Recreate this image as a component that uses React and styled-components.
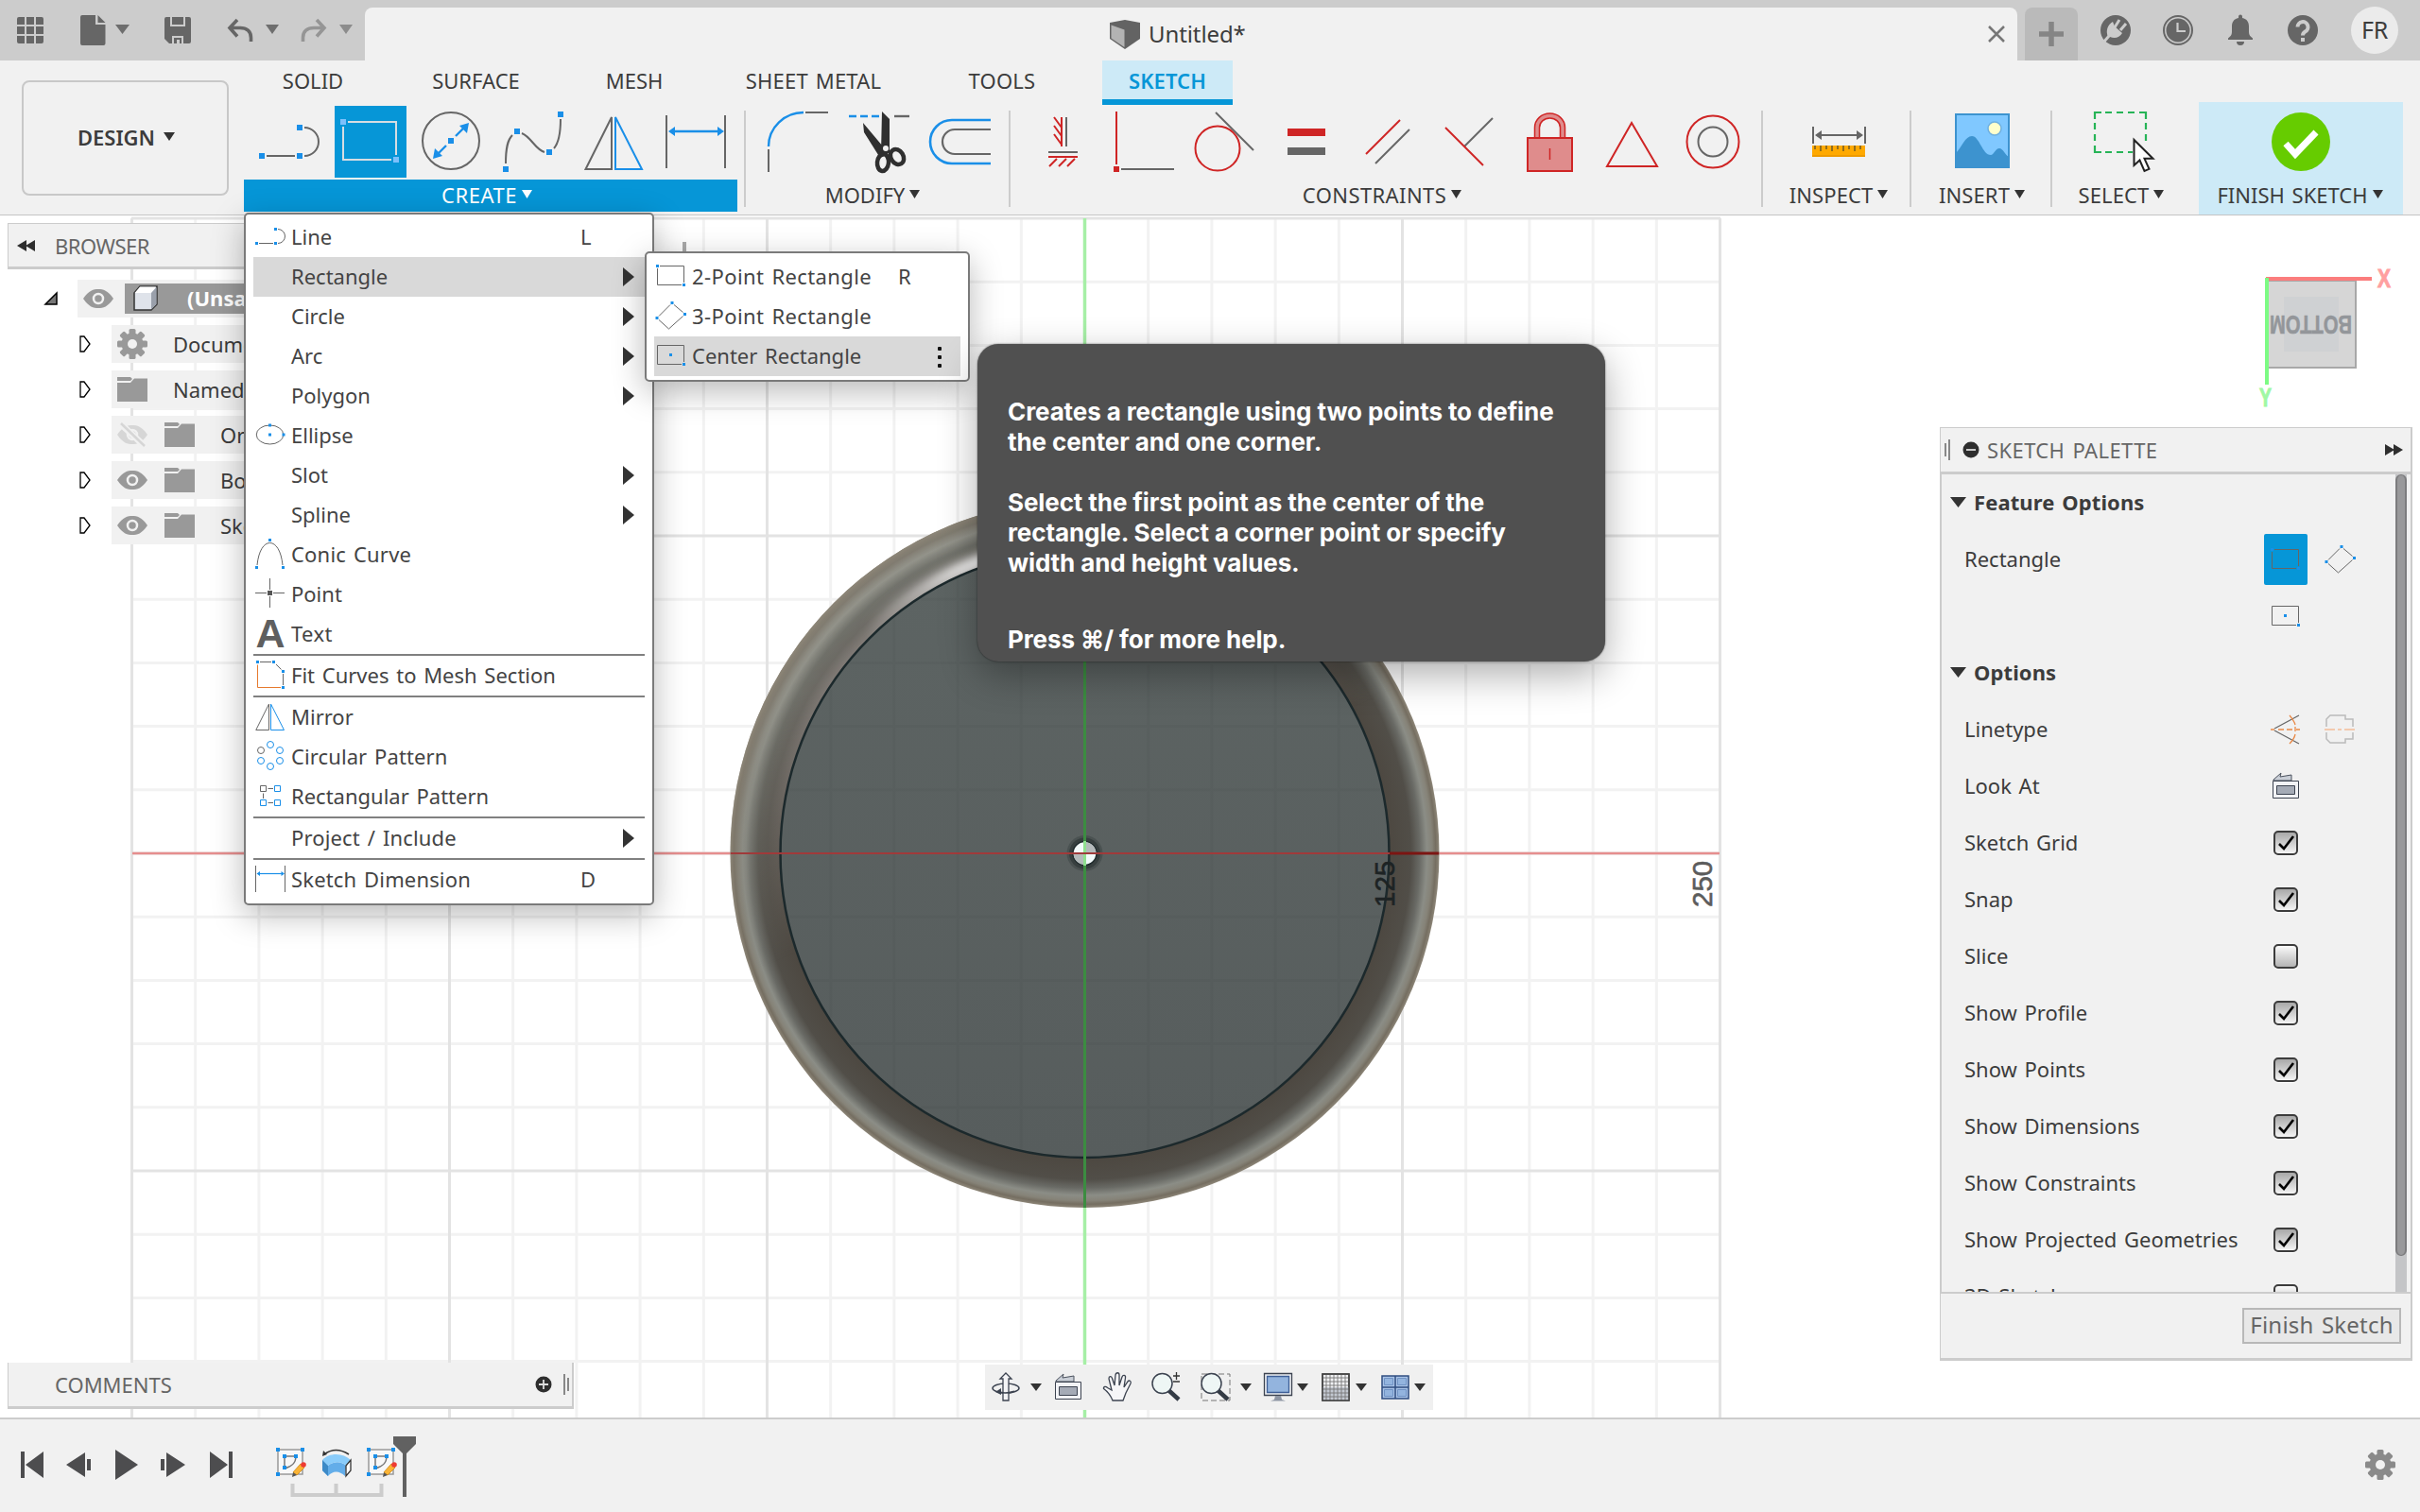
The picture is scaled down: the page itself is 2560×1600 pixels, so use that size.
import React from 'react';
import styled, { createGlobalStyle } from 'styled-components';

const GlobalStyle = createGlobalStyle`
  *, *::before, *::after { box-sizing: border-box; }
  body { margin: 0; background: #fff; }
  svg { display: block; flex: none; overflow: visible; }
`;

const GRAY = '#666';
const BLUE = '#1a8fe8';
const RED = '#cf2525';

/* ---------- frame ---------- */

const Screen = styled.div`
  position: relative;
  width: 2560px;
  height: 1600px;
  overflow: hidden;
  display: flex;
  flex-direction: column;
  background: #fff;
  color: #3c3c3c;
  font-family: 'Noto Sans', 'Open Sans', sans-serif;
  font-size: 22px;
  line-height: 30px;
  word-spacing: 2px;
  white-space: nowrap;
`;

const TopBar = styled.header`
  height: 64px;
  flex: none;
  display: flex;
  align-items: flex-end;
  background: #ccc;
`;

const QuickTools = styled.div`
  width: 386px;
  height: 64px;
  display: flex;
  align-items: center;
`;

const Slot = styled.div`
  margin-left: ${(p) => p.$ml || 0}px;
  margin-top: ${(p) => p.$mt || 0}px;
  display: flex;
`;

const DocumentTab = styled.div`
  width: 1748px;
  height: 56px;
  display: flex;
  align-items: center;
  padding-left: 788px;
  border-radius: 8px 8px 0 0;
  background: #f1f1f1;
`;

const DocumentTitle = styled.span`
  width: 888px;
  margin-left: 9px;
  margin-top: -1px;
  font-size: 24px;
  letter-spacing: -0.1px;
`;

const NewTab = styled.div`
  width: 56px;
  height: 56px;
  margin-left: 8px;
  display: flex;
  align-items: center;
  justify-content: center;
  border-radius: 8px 8px 0 0;
  background: #bababa;
`;

const Account = styled.div`
  height: 64px;
  display: flex;
  align-items: center;
  gap: 34px;
  padding-left: 24px;
`;

const Avatar = styled.div`
  width: 50px;
  height: 50px;
  margin-left: 1px;
  border-radius: 50%;
  background: #ebebeb;
  font-size: 25px;
  line-height: 48px;
  text-align: center;
  letter-spacing: -0.2px;
`;

/* ---------- ribbon ---------- */

const Ribbon = styled.section`
  height: 164px;
  flex: none;
  display: flex;
  background: #f1f1f1;
  border-bottom: 1px solid #c4c4c4;
`;

const WorkspaceButton = styled.div`
  width: 219px;
  height: 122px;
  margin: 21px 0 0 23px;
  padding: 0 0 3px 2px;
  display: flex;
  align-items: center;
  justify-content: center;
  gap: 9px;
  border: 2px solid #c8c8c8;
  border-radius: 8px;
  font-weight: 600;
`;

const RibbonMain = styled.div`
  margin-left: 16px;
  display: flex;
  flex-direction: column;
`;

const RibbonTabs = styled.nav`
  height: 48px;
  display: flex;
`;

const RibbonTab = styled.div`
  width: ${(p) => p.$w}px;
  height: 47px;
  padding-top: 6px;
  text-align: center;
  letter-spacing: ${(p) => p.$ls || 0}px;
  color: ${(p) => (p.$active ? '#0696d7' : 'inherit')};
  font-weight: ${(p) => (p.$active ? 600 : 400)};
  background: ${(p) => (p.$active ? '#cdeaf7' : 'none')};
  border-bottom: ${(p) => (p.$active ? '6px solid #0696d7' : '0')};
`;

const Groups = styled.div`
  display: flex;
`;

const Group = styled.div`
  width: ${(p) => p.$w}px;
  height: 115px;
  display: flex;
  flex-direction: column;
`;

const Tools = styled.div`
  height: 78px;
  padding-left: ${(p) => p.$pl || 0}px;
  display: flex;
  justify-content: center;
  gap: 10px;
`;

const Tool = styled.div`
  width: 76px;
  height: 76px;
  background: ${(p) => (p.$active ? '#0696d7' : 'none')};
`;

const GroupLabel = styled.div`
  height: 34px;
  display: flex;
  align-items: center;
  justify-content: center;
  gap: 5px;
  padding-right: ${(p) => p.$pr || 0}px;
  padding-bottom: 3px;
  color: ${(p) => (p.$active ? '#fff' : 'inherit')};
  background: ${(p) => (p.$active ? '#0696d7' : 'none')};
  letter-spacing: ${(p) => p.$ls || 0}px;
`;

const Divider = styled.div`
  width: 2px;
  height: 102px;
  margin: 5px ${(p) => p.$mr}px 0 ${(p) => p.$ml}px;
  background: #ccc;
`;

const FinishGroup = styled.div`
  width: 216px;
  height: 119px;
  margin: -4px 0 0 ${(p) => p.$ml}px;
  padding-top: 4px;
  display: flex;
  flex-direction: column;
  background: #cdeaf7;
`;

/* ---------- canvas and its panels ---------- */

const Canvas = styled.main`
  position: relative;
  height: 1272px;
  flex: none;
  overflow: hidden;
`;

const BrowserPanel = styled.aside`
  position: absolute;
  left: 0;
  top: 8px;
  width: 420px;
  display: flex;
  flex-direction: column;
`;

const BrowserHeader = styled.div`
  height: 49px;
  margin: 0 0 11px 8px;
  padding-left: 9px;
  display: flex;
  align-items: center;
  gap: 20px;
  color: #666;
  background: #f1f1f1;
  border: 1px solid #ccc;
  border-bottom-width: 3px;
  letter-spacing: -0.5px;
`;

const TreeRow = styled.div`
  height: 40px;
  margin-bottom: 8px;
  display: flex;
  align-items: center;
`;

const Expander = styled.div`
  width: ${(p) => p.$w}px;
  padding-left: ${(p) => p.$pl}px;
`;

const TreeBody = styled.div`
  flex: 1;
  height: 40px;
  padding-left: 6px;
  display: flex;
  align-items: center;
  background: #f1f1f1;
`;

const TreeIcon = styled.div`
  width: 32px;
  margin-right: ${(p) => p.$mr || 18}px;
`;

const TreeName = styled.span`
  margin-left: 9px;
  margin-top: -1px;
`;

const SelectedNode = styled.div`
  flex: 1;
  height: 32px;
  padding-left: 9px;
  padding-bottom: 2px;
  display: flex;
  align-items: center;
  gap: 31px;
  color: #fff;
  background: #999;
  font-weight: 700;
`;

const CommentsPanel = styled.aside`
  position: absolute;
  left: 8px;
  top: 1214px;
  width: 599px;
  height: 49px;
  padding: 0 2px 0 49px;
  display: flex;
  align-items: center;
  color: #666;
  background: #f1f1f1;
  border: solid #ccc;
  border-width: 0 2px 3px 1px;
`;

const Spacer = styled.div`
  flex: 1;
`;

const NavBar = styled.div`
  position: absolute;
  left: 1042px;
  top: 1216px;
  width: 474px;
  height: 48px;
  display: flex;
  align-items: center;
  background: #f0f0f0;
`;

const Palette = styled.aside`
  position: absolute;
  left: 2052px;
  top: 224px;
  width: 500px;
  display: flex;
  flex-direction: column;
`;

const PaletteHeader = styled.div`
  height: 50px;
  padding: 0 8px 0 3px;
  display: flex;
  align-items: center;
  color: #666;
  background: #f1f1f1;
  border: solid #ccc;
  border-width: 1px 2px 3px 1px;
  letter-spacing: 0.4px;
`;

const PaletteBody = styled.div`
  height: 865px;
  display: flex;
  overflow: hidden;
  background: #f1f1f1;
  border: solid #ccc;
  border-width: 0 2px;
`;

const PaletteList = styled.div`
  width: 480px;
`;

const PaletteSection = styled.div`
  height: 60px;
  padding: 0 0 2px 9px;
  display: flex;
  align-items: center;
  gap: 8px;
  font-weight: 700;
  letter-spacing: 0.1px;
`;

const PaletteRow = styled.div`
  height: 60px;
  padding: 0 0 2px 24px;
  display: grid;
  grid-template-columns: 317px auto;
  align-items: center;
`;

const PaletteControls = styled.div`
  margin-top: 2px;
  display: flex;
  gap: 12px;
`;

const PaletteButton = styled.div`
  width: 46px;
  height: 54px;
  display: flex;
  align-items: center;
  justify-content: center;
  border-radius: 2px;
  background: ${(p) => (p.$active ? '#0696d7' : 'none')};
`;

const CheckBox = styled.div`
  width: 26px;
  height: 26px;
  margin: 1px 0 0 10px;
  border: 2px solid #3c3c3c;
  border-radius: 5px;
  background: ${(p) => (p.$on ? 'linear-gradient(#a8a8a8, #f4f4f4)' : 'linear-gradient(#fafafa, #b4b4b4)')};
  box-shadow: 0 1px 1px #fff;
`;

const ScrollTrack = styled.div`
  width: 12px;
  background: #c4c5c7;
`;

const ScrollThumb = styled.div`
  height: 827px;
  border: solid #7c7c7e;
  border-width: 1px 2px;
  border-radius: 6px;
  background: #99999b;
`;

const PaletteFooter = styled.div`
  height: 73px;
  padding-right: 10px;
  display: flex;
  align-items: center;
  justify-content: flex-end;
  background: #f1f1f1;
  border: solid #ccc;
  border-width: 2px 2px 3px 1px;
`;

const FinishButton = styled.div`
  width: 168px;
  height: 38px;
  border: 2px solid #b8b8b8;
  background: #e8e8e8;
  color: #666;
  font-size: 24px;
  line-height: 32px;
  text-align: center;
  letter-spacing: 0.2px;
`;

/* ---------- menus ---------- */

const MenuBox = styled.div`
  position: absolute;
  left: ${(p) => p.$x}px;
  top: ${(p) => p.$y}px;
  width: ${(p) => p.$w}px;
  padding: 4px 8px;
  display: flex;
  flex-direction: column;
  background: #fff;
  border: 2px solid #7a7a7a;
  border-radius: 5px;
  color: #444;
  box-shadow: 0 10px 34px rgba(0, 0, 0, 0.28);
`;

const CreateMenu = styled(MenuBox)`
  padding-top: 3px;
`;

const MenuRow = styled.div`
  height: 42px;
  padding: 0 11px 0 2px;
  display: flex;
  align-items: center;
  background: ${(p) => (p.$active ? '#d9d9d9' : 'none')};
`;

const MenuIcon = styled.div`
  width: 32px;
  height: 34px;
  margin-right: 6px;
`;

const MenuLabel = styled.span`
  flex: 1;
  margin-top: -2px;
  letter-spacing: ${(p) => p.$ls || 0}px;
`;

const Shortcut = styled.span`
  width: ${(p) => p.$w || 57}px;
  margin-top: -2px;
`;

const MenuRule = styled.div`
  height: 2px;
  background: #808080;
`;

const Dots = styled.div`
  width: 22px;
  height: 22px;
  margin-top: 2px;
  display: flex;
  flex-direction: column;
  align-items: center;
  justify-content: space-between;
  & > i { width: 4px; height: 4px; border-radius: 1px; background: #111; }
`;

const Tooltip = styled.div`
  position: absolute;
  left: 1034px;
  top: 364px;
  width: 664px;
  height: 336px;
  padding: 56px 32px 0;
  border-radius: 22px;
  background: #505050;
  color: #fff;
  font-family: Inter, 'DejaVu Sans', sans-serif;
  font-size: 26px;
  font-weight: 700;
  line-height: 32px;
  letter-spacing: -0.1px;
  word-spacing: 0;
  box-shadow: 0 14px 40px rgba(0, 0, 0, 0.32), 0 0 2px rgba(0, 0, 0, 0.6);
  & > p { margin: 0 0 32px; }
  & > p:last-child { padding-top: 17px; }
`;

/* ---------- timeline ---------- */

const Timeline = styled.footer`
  height: 100px;
  flex: none;
  display: flex;
  align-items: flex-start;
  background: #f1f1f1;
  border-top: 2px solid #ccc;
`;

const Features = styled.div`
  width: 130px;
  margin: 30px 0 0 46px;
  display: flex;
  flex-direction: column;
  gap: 6px;
`;

const FeatureRow = styled.div`
  display: flex;
  gap: 16px;
`;

/* ---------- small drawings ---------- */

const Down = ({ w = 12, h = 10, c = '#333' }) => (
  <svg width={w} height={h} viewBox="0 0 12 10" preserveAspectRatio="none"><path d="M0 0h12L6 10z" fill={c} /></svg>
);

const Sq = ({ x, y, c = BLUE, s = 6 }) => <rect x={x - s / 2} y={y - s / 2} width={s} height={s} fill={c} />;

const shapes = {
  line: <g fill="none" stroke={GRAY} strokeWidth="2"><path d="M14 53h30M54 53a15 15 0 0 0 0-30" /><g stroke="none"><Sq x={9} y={53} /><Sq x={49} y={53} /><Sq x={49} y={23} /></g></g>,
  rectActive: <g><path d="M14 17H65V52M60 57H9V22" fill="none" stroke="#d6dde2" strokeWidth="2" /><Sq x={9} y={17} c="#7cc0fb" /><Sq x={65} y={57} c="#7cc0fb" /></g>,
  rect: <g><path d="M14 17H65V52M60 57H9V22" fill="none" stroke={GRAY} strokeWidth="2" /><Sq x={9} y={17} /><Sq x={65} y={57} /></g>,
  centerRect: <g><path d="M65 52V17H9V57H60" fill="none" stroke={GRAY} strokeWidth="2" /><Sq x={37} y={37} /><Sq x={65} y={57} /></g>,
  diamond: <g><path d="M36 15L12 39M44 15L63 31M63 39L33 66L12 47" fill="none" stroke={GRAY} strokeWidth="2" /><Sq x={40} y={11} /><Sq x={8} y={43} /><Sq x={67} y={35} /></g>,
  circle: <g><circle cx="37" cy="37" r="30" fill="none" stroke={GRAY} strokeWidth="2" /><path d="M42 32L51 23M32 42L23 51" stroke={BLUE} strokeWidth="2.4" /><path d="M56 18l-2 11-8-8zM18 56l2-11 8 8z" fill={BLUE} /><Sq x={37} y={37} /></g>,
  spline: <g><path d="M9 61C9 44 11 36 16 31M26 29C36 33 40 46 50 49M60 45C66 38 67 24 67 14" fill="none" stroke={GRAY} strokeWidth="2" /><Sq x={9} y={67} /><Sq x={21} y={27} /><Sq x={55} y={49} /><Sq x={67} y={9} /></g>,
  mirror: <g fill="none" strokeWidth="2"><path d="M35 12V67H7.500z" stroke={GRAY} /><path d="M39 12V67H67z" stroke={BLUE} /></g>,
  dimension: <g><path d="M7 10V66M69 10V66" stroke={GRAY} strokeWidth="2" /><path d="M12 27H64" stroke={BLUE} strokeWidth="2.4" /><path d="M9 27l7-5v10zM68 27l-7-5v10z" fill={BLUE} /></g>,
  fillet: <g fill="none"><path d="M7 43A37 36 0 0 1 44 7" stroke={BLUE} strokeWidth="2.4" /><path d="M46 7H70M7 46V70" stroke={GRAY} strokeWidth="2" /></g>,
  trim: <g><path d="M6 11h8M18 11h8M30 11h8" stroke={BLUE} strokeWidth="2.4" /><path d="M54 11h16" stroke={GRAY} strokeWidth="2.4" /><path d="M41 6l8 8v35l-5 4-4-3zM21 18l21 25 2 10-5 2-17-27z" fill="#2f2f2f" /><circle cx="45" cy="45" r="3" fill="#f1f1f1" /><g fill="none" stroke="#2f2f2f" strokeWidth="4.500"><ellipse cx="42" cy="60" rx="6" ry="9" transform="rotate(6 42 60)" /><ellipse cx="57" cy="54" rx="6.500" ry="8.500" transform="rotate(-32 57 54)" /></g></g>,
  offset: <g fill="none"><path d="M70 15H29a23 23 0 0 0 0 46h41" stroke={BLUE} strokeWidth="2.600" /><path d="M70 25H32a13 13 0 0 0 0 26h38" stroke={GRAY} strokeWidth="2.200" /></g>,
  ground: <g fill="none" strokeWidth="2"><path d="M37 12V43M29 12l8 11M29 21l8 11M29 30l8 11M23 54H54M32 56l-8 8M42 56l-8 8M51 56l-8 8" stroke={RED} /><path d="M42 12V43M23 49H54" stroke={GRAY} /></g>,
  coincident: <g><path d="M9 6V62" stroke={RED} strokeWidth="2" /><path d="M14 67H70" stroke={GRAY} strokeWidth="2" /><Sq x={9} y={67} c={RED} /></g>,
  tangent: <g fill="none" strokeWidth="2"><path d="M28 7L68 47" stroke={GRAY} /><circle cx="30" cy="45" r="23.500" stroke={RED} /></g>,
  equal: <g><path d="M18 24h40v8H18z" fill={RED} /><path d="M18 44h40v8H18z" fill={GRAY} /></g>,
  parallel: <g strokeWidth="2"><path d="M15 51L51 15" stroke={RED} /><path d="M25 61L61 25" stroke={GRAY} /></g>,
  perpendicular: <g strokeWidth="2"><path d="M33 43L63 13" stroke={GRAY} /><path d="M13 23L53 63" stroke={RED} /></g>,
  lock: <g stroke={RED}><path d="M21.500 34V23a16 15 0 0 1 32 0V34h-5V23a11 10 0 0 0-22 0V34z" fill="#df8c8c" strokeWidth="1.500" /><path d="M14 34h47v35H14z" fill="#df8c8c" strokeWidth="2" /><path d="M37.500 45V57" strokeWidth="1.500" /></g>,
  polygon: <path d="M38 18L12 64H65z" fill="none" stroke={RED} strokeWidth="2" />,
  concentric: <g fill="none" strokeWidth="2"><circle cx="38" cy="38" r="27.500" stroke={RED} /><circle cx="38" cy="38" r="15.500" stroke={GRAY} /></g>,
  inspect: <g><path d="M11 22V40M66 22V40M15 31H62" stroke={GRAY} strokeWidth="2" /><path d="M13 31l7-5v10zM64 31l-7-5v10z" fill={GRAY} /><path d="M10 42h56v12H10z" fill="#ffa900" /><path d="M10 52h56v2H10z" fill="#ee9a00" /><path d="M13 42v4M19 42v6M25 42v4M31 42v6M37 42v4M43 42v6M49 42v4M55 42v6M61 42v4" stroke="#6f5a26" strokeWidth="1.500" /></g>,
  insert: <g><path d="M10 9h56v56H10z" fill="#80c8ff" stroke="#3d93cf" strokeWidth="2" /><path d="M10 50C16 44 20 32 27 32C35 32 38 52 47 52C50 52 52 45 56 45C60 45 62 52 66 54V65H10z" fill="#3d93cf" /><circle cx="51" cy="24" r="7" fill="#ffffcc" stroke="#6fb0e0" strokeWidth="1.500" /></g>,
  select: <g><path d="M10 14V7h7M21 7h7M33 7h7M45 7h7M57 7h7V14M10 18v7M10 30v7M10 42v7h7M21 49h7M33 49h7M45 49h5M64 18v7M64 30v7" fill="none" stroke="#27b457" strokeWidth="2.200" /><path d="M51.500 36V63l6-5.500 5 11.500 5-2.200-5-11h9z" fill="#fff" stroke="#222" strokeWidth="2" /></g>,
  finish: <g><circle cx="38" cy="38" r="31" fill="#6c0" /><path d="M22 40l10 11L54 28" fill="none" stroke="#fff" strokeWidth="7" /></g>,
  ellipse: <g><ellipse cx="37" cy="38" rx="28.500" ry="20" fill="none" stroke={GRAY} strokeWidth="2" /><Sq x={37} y={18} /><Sq x={66} y={38} /><Sq x={37} y={38} /></g>,
  conic: <g><path d="M10 62C13 32 24 15 37 15S61 32 64 62" fill="none" stroke={GRAY} strokeWidth="2" /><Sq x={37} y={9} /><Sq x={9} y={67} /><Sq x={65} y={67} /></g>,
  point: <g><path d="M6 37H30M44 37H68M37 6V30M37 44V68" stroke={GRAY} strokeWidth="2" /><Sq x={37} y={37} c="#555" s={10} /></g>,
  text: <text x="38" y="68" fontFamily="'Liberation Sans', sans-serif" fontWeight="700" fontSize="86" fill="#5f5f5f" textAnchor="middle">A</text>,
  fit: <g fill="none" strokeWidth="2"><path d="M16 11H40M50 16l11 11M65 36V60" stroke={GRAY} /><path d="M11 17V65H60" stroke="#e67a2e" /><g stroke="none"><Sq x={11} y={11} /><Sq x={45} y={11} /><Sq x={65} y={31} /><Sq x={65} y={65} /></g></g>,
  circular: <g fill="none" stroke={BLUE} strokeWidth="2">{[[38, 14], [58, 26], [58, 48], [38, 60], [18, 48]].map(([x, y]) => <circle key={x + '-' + y} cx={x} cy={y} r="7" />)}<circle cx="18" cy="26" r="7" stroke={GRAY} /></g>,
  rectangular: <g fill="none" stroke={BLUE} strokeWidth="2"><path d="M47 17h12v12H47zM17 47h12v12H17zM47 47h12v12H47z" /><path d="M17 17h12v12H17zM33 23h11M33 53h11M23 33v11" stroke={GRAY} /></g>,
};

const BigIcon = ({ name }) => <svg width="76" height="76" viewBox="0 0 76 76">{shapes[name]}</svg>;
const SmallIcon = ({ name }) => <svg width="32" height="32" viewBox="6 6 64 64">{shapes[name]}</svg>;

const Eye = ({ off }) => (
  <svg width="32" height="24" viewBox="0 0 32 24">
    <g opacity={off ? 0.3 : 1}>
      <path d="M0 12C6 3 11 2 16 2s10 1 16 10c-6 9-11 10-16 10S6 21 0 12z" fill="#999" />
      <circle cx="16" cy="12" r="5" fill="#999" stroke="#f1f1f1" strokeWidth="2.500" />
      {off && <path d="M3 0L29 24" stroke="#f1f1f1" strokeWidth="7" />}
      {off && <path d="M4 0L29 24" stroke="#999" strokeWidth="2.500" />}
    </g>
  </svg>
);

const Folder = () => (
  <svg width="32" height="26" viewBox="0 0 32 26">
    <path d="M0 0h14l2 2-2 2H0zM0 6h14l4-4.500h14V26H0z" fill="#999" />
  </svg>
);

const Gear = ({ s = 32, c = '#999', hole = '#f1f1f1' }) => (
  <svg width={s} height={s} viewBox="-16 -16 32 32">
    {[0, 45, 90, 135].map((a) => <rect key={a} x="-3.500" y="-16" width="7" height="32" rx="1.500" fill={c} transform={`rotate(${a})`} />)}
    <circle r="11.500" fill={c} /><circle r="5" fill={hole} />
  </svg>
);

const Handle = ({ flip }) => (
  <svg width="8" height="22" viewBox="0 0 8 22">
    <path d={flip ? 'M2 0V22M6 4V18' : 'M2 4V18M6 0V22'} stroke="#888" strokeWidth="2" />
  </svg>
);

const RoundSign = ({ plus }) => (
  <svg width="18" height="18" viewBox="0 0 18 18">
    <circle cx="9" cy="9" r="8.500" fill="#2e2e2e" />
    <path d={plus ? 'M4 9h10M9 4v10' : 'M4 9h10'} stroke="#ddd" strokeWidth="1.800" />
  </svg>
);

const Chevrons = ({ left }) => (
  <svg width="20" height="12" viewBox="0 0 20 12">
    <path d={left ? 'M0 6L10 0v12zM9 6l10-6v12z' : 'M1 0l10 6-10 6zM10 0l10 6-10 6z'} fill="#2e2e2e" />
  </svg>
);

const LookAt = () => (
  <svg width="32" height="32" viewBox="0 0 32 32">
    <path d="M3 9l8-7-1 4 12-2v6H3z" fill="#c9ced6" stroke="#4b525e" />
    <path d="M2.500 10.500h27v18h-27z" fill="#f2f3f6" stroke="#3c4350" />
    <path d="M6.500 15.500h19v9h-19z" fill="#a5abb6" stroke="#3c4350" />
  </svg>
);

const Check = () => (
  <svg width="22" height="22" viewBox="0 0 22 22"><path d="M4 12l5 5L19 4" fill="none" stroke="#000" strokeWidth="2.600" /></svg>
);

/* ---------- model view ---------- */

const CX = 1147.5;
const CY = 903;
const STEP = 67.2;

const gridLines = () => {
  const minor = [];
  const major = [];
  for (let i = -15; i <= 10; i += 1) {
    const list = i % 5 === 0 ? major : minor;
    const stroke = i % 5 === 0 ? '#e3e3e3' : '#f2f2f2';
    list.push(<path key={'v' + i} d={`M${CX + i * STEP} 231V1500`} stroke={stroke} strokeWidth="3" />);
    if (i >= -10) {
      list.push(<path key={'h' + i} d={`M139 ${CY + i * STEP}H1820`} stroke={stroke} strokeWidth="3" />);
    }
  }
  return [...minor, ...major];
};

const ModelView = () => (
  <svg width="2560" height="1272" viewBox="0 228 2560 1272">
    <defs>
      <radialGradient id="rim" gradientUnits="userSpaceOnUse" cx={CX} cy={CY} r="375">
        <stop offset="0.860" stopColor="#4d4841" />
        <stop offset="0.920" stopColor="#514e48" />
        <stop offset="0.945" stopColor="#696a65" />
        <stop offset="0.965" stopColor="#8b8d86" />
        <stop offset="0.980" stopColor="#868378" />
        <stop offset="0.990" stopColor="#756e61" />
        <stop offset="1" stopColor="#8d8678" />
      </radialGradient>
      <radialGradient id="rimTop" gradientUnits="userSpaceOnUse" cx={CX} cy={CY} r="375">
        <stop offset="0.860" stopColor="#8a8480" />
        <stop offset="0.895" stopColor="#716f69" />
        <stop offset="0.925" stopColor="#74756e" />
        <stop offset="0.955" stopColor="#95958c" />
        <stop offset="0.980" stopColor="#807b70" />
        <stop offset="1" stopColor="#8d8678" />
      </radialGradient>
      <linearGradient id="fade" x1="0.200" y1="0" x2="0.420" y2="0.500">
        <stop offset="0" stopColor="#fff" />
        <stop offset="0.400" stopColor="#fff" stopOpacity="0.850" />
        <stop offset="1" stopColor="#fff" stopOpacity="0" />
      </linearGradient>
      <linearGradient id="glint" gradientUnits="userSpaceOnUse" x1="915" y1="0" x2="1040" y2="0">
        <stop offset="0" stopColor="#fff" stopOpacity="0" />
        <stop offset="0.500" stopColor="#fff" stopOpacity="0.450" />
        <stop offset="1" stopColor="#fff" />
      </linearGradient>
      <mask id="upper"><rect x="770" y="520" width="760" height="760" fill="url(#fade)" /></mask>
      <linearGradient id="face" x1="0" y1="0" x2="0" y2="1">
        <stop offset="0" stopColor="#5d6463" /><stop offset="1" stopColor="#575d5d" />
      </linearGradient>
      <filter id="soft" filterUnits="userSpaceOnUse" x="850" y="520" width="320" height="260"><feGaussianBlur stdDeviation="5" /></filter>
      <clipPath id="disc"><circle cx={CX} cy={CY} r="372" /></clipPath>
    </defs>
    {gridLines()}
    <path d={`M${CX} 231V1500`} stroke="#a6efa6" strokeWidth="3.500" />
    <path d={`M140 ${CY}H1819`} stroke="#e68e8e" strokeWidth="2.500" />
    <path d="M724 256V280" stroke="#aaa" strokeWidth="4" />
    <circle cx={CX} cy={CY} r="375" fill="url(#rim)" />
    <circle cx={CX} cy={CY} r="375" fill="url(#rimTop)" mask="url(#upper)" />
    <g clipPath="url(#disc)">
      <path d="M899 689A328 328 0 0 1 1090 580" fill="none" stroke="url(#glint)" strokeWidth="16" filter="url(#soft)" />
    </g>
    <circle cx={CX} cy={CY} r="322" fill="url(#face)" stroke="#1c292c" strokeWidth="2.500" />
    <g opacity="0.025" stroke="#000" strokeWidth="3">
      {[-4, -3, -2, -1, 1, 2, 3, 4].map((i) => {
        const half = Math.sqrt(320 * 320 - i * i * STEP * STEP);
        return <path key={i} d={`M${CX + i * STEP} ${CY - half}v${2 * half}M${CX - half} ${CY + i * STEP}h${2 * half}`} />;
      })}
    </g>
    <circle cx={CX} cy={CY} r="19" fill="#3f4848" opacity="0.600" />
    <circle cx={CX} cy={CY} r="16.500" fill="#343c3c" opacity="0.850" />
    <circle cx={CX} cy={CY} r="12.500" fill="#f2fafb" stroke="#1f2a2c" strokeWidth="1.500" />
    <path d={`M${CX} ${CY}v-12a12 12 0 0 1 12 12zM${CX} ${CY}v12a12 12 0 0 1-12-12z`} fill="#b4babb" />
    <path d={`M${CX} 560V${CY - 13}M${CX} ${CY + 13}V1278`} stroke="#3c8c41" strokeWidth="3" />
    <path d={`M${CX} ${CY - 13}v26`} stroke="#8fe08f" strokeWidth="3" />
    <path d={`M773 ${CY}H1470`} stroke="#a03a3a" strokeWidth="2" />
    <path d={`M1470 ${CY}H1522`} stroke="#7c1512" strokeWidth="3" />
    <g fontFamily="'Liberation Sans', Arial, sans-serif" fontSize="29.500" strokeWidth="0.600">
      <text transform="translate(1475 960) rotate(-90)" fill="#1d2324" stroke="#1d2324">125</text>
      <text transform="translate(1811 960) rotate(-90)" fill="#5c5c5c" stroke="#5c5c5c">250</text>
    </g>
    <rect x="2399" y="297" width="93" height="92" fill="#d6d6d6" stroke="#a8a8a8" strokeWidth="2" />
    <rect x="2416" y="314" width="58" height="58" fill="#cfd1d3" />
    <path d="M2397 295H2509" stroke="#fb7d7d" strokeWidth="4" />
    <path d="M2398 294V407" stroke="#7dfb84" strokeWidth="4" />
    <g fontFamily="'Liberation Sans', Arial, sans-serif" fontWeight="700">
      <text x="2515" y="304" fontSize="28" textLength="14" lengthAdjust="spacingAndGlyphs" fill="#ffa0a0" stroke="#ffa0a0">X</text>
      <text x="2390" y="430" fontSize="28" textLength="13" lengthAdjust="spacingAndGlyphs" fill="#a0f8a4" stroke="#a0f8a4">Y</text>
      <text transform="translate(2488 334) rotate(180)" fontSize="27.500" textLength="87" lengthAdjust="spacingAndGlyphs" fill="#93969a" stroke="#93969a" strokeWidth="0.600">BOTTOM</text>
    </g>
  </svg>
);

/* ---------- data ---------- */

const createItems = [
  { label: 'Line', icon: 'line', key: 'L' },
  { label: 'Rectangle', sub: true, active: true },
  { label: 'Circle', sub: true },
  { label: 'Arc', sub: true },
  { label: 'Polygon', sub: true },
  { label: 'Ellipse', icon: 'ellipse' },
  { label: 'Slot', sub: true },
  { label: 'Spline', sub: true },
  { label: 'Conic Curve', icon: 'conic', ls: 0.2 },
  { label: 'Point', icon: 'point' },
  { label: 'Text', icon: 'text', ls: 0.4 },
  { rule: true },
  { label: 'Fit Curves to Mesh Section', icon: 'fit' },
  { rule: true },
  { label: 'Mirror', icon: 'mirror' },
  { label: 'Circular Pattern', icon: 'circular', ls: 0.1 },
  { label: 'Rectangular Pattern', icon: 'rectangular' },
  { rule: true },
  { label: 'Project / Include', sub: true, ls: 0.15 },
  { rule: true },
  { label: 'Sketch Dimension', icon: 'dimension', key: 'D', ls: 0.15 },
];

const treeItems = [
  { name: 'Document Settings', icon: 'gear' },
  { name: 'Named Views', icon: 'folder' },
  { name: 'Origin', icon: 'folder', eye: 'off' },
  { name: 'Bodies', icon: 'folder', eye: 'on' },
  { name: 'Sketches', icon: 'folder', eye: 'on' },
];

const checks = [
  ['Sketch Grid', true], ['Snap', true], ['Slice', false], ['Show Profile', true], ['Show Points', true],
  ['Show Dimensions', true], ['Show Constraints', true], ['Show Projected Geometries', true], ['3D Sketch', false],
];

const ribbonTabs = [
  ['SOLID', 146, 0], ['SURFACE', 199, 0], ['MESH', 136, 0], ['SHEET METAL', 243, 0.2], ['TOOLS', 156, 0.2],
];

/* ---------- sections ---------- */

const Header = () => (
  <TopBar>
    <QuickTools>
      <Slot $ml={18}>
        <svg width="28" height="28" viewBox="0 0 28 28"><path d="M0 2a2 2 0 0 1 2-2h6v8H0zM10 0h8v8h-8zM20 0h6a2 2 0 0 1 2 2v6h-8zM0 10h8v8H0zM10 10h8v8h-8zM20 10h8v8h-8zM0 20h8v8H2a2 2 0 0 1-2-2zM10 20h8v8h-8zM20 20h8v6a2 2 0 0 1-2 2h-6z" fill={GRAY} /></svg>
      </Slot>
      <Slot $ml={39}>
        <svg width="27" height="32" viewBox="0 0 27 32"><path d="M2 0h14v10h10.500v20a2 2 0 0 1-2 2H2a2 2 0 0 1-2-2V2a2 2 0 0 1 2-2zM18.500 0l8 8h-8z" fill={GRAY} /></svg>
      </Slot>
      <Slot $ml={10} $mt={-3}><Down w={15} h={10} c="#6e6e6e" /></Slot>
      <Slot $ml={37}>
        <svg width="28" height="28" viewBox="0 0 28 28">
          <path d="M2 0h4v10h16V0h4a2 2 0 0 1 2 2v24a2 2 0 0 1-2 2h-6v-8H8v8H5l-5-5V2a2 2 0 0 1 2-2zM8 0h12v8H8zM10 22h8v6h-2v-4h-3v4h-3z" fill={GRAY} />
        </svg>
      </Slot>
      <Slot $ml={39}>
        <svg width="26" height="24" viewBox="0 0 26 24"><path d="M24.500 24V20C24.500 13 20 9.500 13 9.500H3M10 1L2 9.500l8 9" fill="none" stroke={GRAY} strokeWidth="3.600" /></svg>
      </Slot>
      <Slot $ml={14} $mt={-3}><Down w={14} h={10} c="#6e6e6e" /></Slot>
      <Slot $ml={24}>
        <svg width="26" height="24" viewBox="0 0 26 24"><path d="M1.500 24V20C1.500 13 6 9.500 13 9.500H23M16 1l8 8.500-8 9" fill="none" stroke="#959595" strokeWidth="3.600" /></svg>
      </Slot>
      <Slot $ml={14} $mt={-3}><Down w={14} h={10} c="#8c8c8c" /></Slot>
    </QuickTools>
    <DocumentTab>
      <svg width="32" height="31" viewBox="0 0 32 31">
        <path d="M0 3L16 0l16 3v17L16 31 0 20z" fill="#636363" /><path d="M1.500 5.500L15.500 10.500V29L1.500 19.500z" fill="#b3b3b3" />
      </svg>
      <DocumentTitle>Untitled*</DocumentTitle>
      <svg width="18" height="18" viewBox="0 0 18 18"><path d="M1 1l16 16M17 1L1 17" stroke="#777" strokeWidth="2.500" /></svg>
    </DocumentTab>
    <NewTab>
      <svg width="26" height="26" viewBox="0 0 26 26"><path d="M13 0V26M0 13H26" stroke="#858585" strokeWidth="5.500" /></svg>
    </NewTab>
    <Account>
      <svg width="32" height="32" viewBox="0 0 32 32">
        <circle cx="16" cy="16" r="16" fill={GRAY} />
        <path d="M20 5l-5 8M27 9l-6 7" stroke="#ccc" strokeWidth="3" />
        <path d="M8 23C5 16 8 10 13 7l2 5 8 7c-3 5-8 6-13 4z" fill="#ccc" />
        <path d="M11 20c-2-4-1-7 2-9l7 8c-2 3-6 3-9 1z" fill="#ccc" />
        <path d="M10 21L2 30" stroke="#ccc" strokeWidth="3" />
      </svg>
      <svg width="32" height="32" viewBox="0 0 32 32">
        <circle cx="16" cy="16" r="15" fill="none" stroke={GRAY} strokeWidth="2" /><circle cx="16" cy="16" r="12.500" fill={GRAY} />
        <path d="M15.500 8v9H24" fill="none" stroke="#ccc" strokeWidth="2.200" />
      </svg>
      <svg width="32" height="32" viewBox="0 0 32 32">
        <path d="M14 3V1.500a2 2 0 0 1 4 0V3c5 1 7 4.500 7 9v6c0 3 1.500 4.500 4 6.500v1.500H3v-1.500c2.500-2 4-3.500 4-6.500v-6c0-4.500 2-8 7-9zM12 28h8a4 4 0 0 1-8 0z" fill={GRAY} />
      </svg>
      <svg width="32" height="32" viewBox="0 0 32 32">
        <circle cx="16" cy="16" r="16" fill={GRAY} />
        <path d="M10.500 12.500a5.500 5.500 0 1 1 8 5c-2 1.200-2.500 2-2.500 4" fill="none" stroke="#ccc" strokeWidth="4" /><path d="M14 24h4v4h-4z" fill="#ccc" />
      </svg>
      <Avatar>FR</Avatar>
    </Account>
  </TopBar>
);

const ToolGroup = ({ w, icons, label, active, pl, pr, ls }) => (
  <Group $w={w}>
    <Tools $pl={pl}>
      {icons.map((n) => <Tool key={n} $active={n === 'rectActive'}><BigIcon name={n} /></Tool>)}
    </Tools>
    <GroupLabel $active={active} $pr={pr} $ls={ls}>{label}<Down c={active ? '#fff' : '#333'} w={11} h={9} /></GroupLabel>
  </Group>
);

const Toolbar = () => (
  <Ribbon>
    <WorkspaceButton>DESIGN<Down w={12} h={9} /></WorkspaceButton>
    <RibbonMain>
      <RibbonTabs>
        {ribbonTabs.map(([t, w, ls]) => <RibbonTab key={t} $w={w} $ls={ls}>{t}</RibbonTab>)}
        <Slot $ml={28}><RibbonTab $w={138} $active $ls={0.1}>SKETCH</RibbonTab></Slot>
      </RibbonTabs>
      <Groups>
        <ToolGroup w={522} label="CREATE" active pl={4} pr={8} ls={0.5} icons={['line', 'rectActive', 'circle', 'spline', 'mirror', 'dimension']} />
        <Divider $ml={7} $mr={10} />
        <ToolGroup w={262} label="MODIFY" pr={14} icons={['fillet', 'trim', 'offset']} />
        <Divider $ml={6} $mr={12} />
        <ToolGroup w={774} label="CONSTRAINTS" pr={12} ls={0.4} icons={['ground', 'coincident', 'tangent', 'equal', 'parallel', 'perpendicular', 'lock', 'polygon', 'concentric']} />
        <Divider $ml={8} $mr={12} />
        <ToolGroup w={136} label="INSPECT" ls={0.1} icons={['inspect']} />
        <Divider $ml={7} $mr={8} />
        <ToolGroup w={134} label="INSERT" ls={0.1} pr={1} icons={['insert']} />
        <Divider $ml={5} $mr={7} />
        <ToolGroup w={132} label="SELECT" ls={0.1} icons={['select']} />
        <FinishGroup $ml={16}>
          <Tools><Tool><BigIcon name="finish" /></Tool></Tools>
          <GroupLabel $pr={2}>FINISH SKETCH<Down w={11} h={9} /></GroupLabel>
        </FinishGroup>
      </Groups>
    </RibbonMain>
  </Ribbon>
);

const Browser = () => (
  <BrowserPanel>
    <BrowserHeader><Chevrons left />BROWSER</BrowserHeader>
    <TreeRow>
      <Expander $w={82} $pl={47}>
        <svg width="14" height="14" viewBox="0 0 14 14"><path d="M13 1V13H1z" fill="#777" stroke="#000" strokeWidth="1.500" /></svg>
      </Expander>
      <TreeBody>
        <TreeIcon $mr={12}><Eye /></TreeIcon>
        <SelectedNode>
          <svg width="26" height="27" viewBox="0 0 26 27">
            <path d="M1 8L7 1h18v19l-6 6H1z" fill="#dfe3ea" stroke="#333" strokeWidth="1.500" /><path d="M1.500 8L7 1.500h17L19 8z" fill="#fff" /><path d="M19 8l5.500-6v18L19 25.500z" fill="#9aa0ab" />
          </svg>
          (Unsaved)
        </SelectedNode>
      </TreeBody>
    </TreeRow>
    {treeItems.map((t) => (
      <TreeRow key={t.name}>
        <Expander $w={118} $pl={84}>
          <svg width="12" height="18" viewBox="0 0 12 18"><path d="M1 1l4 0 6 8-6 8H1z" fill="#fff" stroke="#000" strokeWidth="1.300" /></svg>
        </Expander>
        <TreeBody>
          {t.eye && <TreeIcon><Eye off={t.eye === 'off'} /></TreeIcon>}
          <TreeIcon>{t.icon === 'gear' ? <Gear /> : <Folder />}</TreeIcon>
          <TreeName>{t.name}</TreeName>
        </TreeBody>
      </TreeRow>
    ))}
  </BrowserPanel>
);

const SketchPalette = () => (
  <Palette>
    <PaletteHeader>
      <Handle />
      <Slot $ml={12}><RoundSign /></Slot>
      <Slot $ml={8} $mt={-1}>SKETCH PALETTE</Slot>
      <Spacer />
      <Chevrons />
    </PaletteHeader>
    <PaletteBody>
      <PaletteList>
        <PaletteSection><Down w={17} h={11} />Feature Options</PaletteSection>
        <PaletteRow>
          Rectangle
          <PaletteControls>
            <PaletteButton $active><SmallIcon name="rect" /></PaletteButton>
            <PaletteButton><SmallIcon name="diamond" /></PaletteButton>
          </PaletteControls>
        </PaletteRow>
        <PaletteRow>
          <span />
          <PaletteControls><PaletteButton><SmallIcon name="centerRect" /></PaletteButton></PaletteControls>
        </PaletteRow>
        <PaletteSection><Down w={17} h={11} />Options</PaletteSection>
        <PaletteRow>
          Linetype
          <PaletteControls>
            <PaletteButton>
              <svg width="32" height="32" viewBox="0 0 32 32">
                <path d="M30 1L4 15M4 17l26 14" stroke={GRAY} strokeWidth="1.200" />
                <path d="M0 16h4M8 16h6M17 16h6M27 16h4M20 1q5 6 6 10M26 13v5M26 21q-1 5-6 10" fill="none" stroke="#e98a48" strokeWidth="1.300" />
              </svg>
            </PaletteButton>
            <PaletteButton>
              <svg width="32" height="32" viewBox="0 0 32 32">
                <path d="M1 13V5l4-4h16v4h8v8M1 19v7l4 4h16v-4h8v-7" fill="none" stroke="#bbb" strokeWidth="1.500" />
                <path d="M-1 16h11M13 16h4M20 16h11" stroke="#f3bd98" strokeWidth="1.500" />
              </svg>
            </PaletteButton>
          </PaletteControls>
        </PaletteRow>
        <PaletteRow>
          Look At
          <PaletteControls><PaletteButton><LookAt /></PaletteButton></PaletteControls>
        </PaletteRow>
        {checks.map(([name, on]) => (
          <PaletteRow key={name}>{name}<CheckBox $on={on}>{on && <Check />}</CheckBox></PaletteRow>
        ))}
      </PaletteList>
      <ScrollTrack><ScrollThumb /></ScrollTrack>
    </PaletteBody>
    <PaletteFooter><FinishButton>Finish Sketch</FinishButton></PaletteFooter>
  </Palette>
);

const Magnifier = ({ boxed }) => (
  <svg width="32" height="32" viewBox="0 0 32 32">
    {boxed && <path d="M1 2h30v28H1z" fill="none" stroke="#777" strokeDasharray="6 3" />}
    <path d="M18 19l11 10" stroke="#333a44" strokeWidth="4.500" />
    <circle cx="11.500" cy="12" r="10.500" fill="#eef6f5" stroke="#3c4350" strokeWidth="1.500" />
    {!boxed && <path d="M23 4h7M26.500 0v8M23 10h7" stroke="#333" strokeWidth="1.300" />}
  </svg>
);

const Navigation = () => (
  <NavBar>
    <Slot $ml={7}>
      <svg width="32" height="32" viewBox="0 0 32 32">
        <ellipse cx="15" cy="17" rx="14" ry="5" fill="none" stroke="#3c4350" strokeWidth="1.500" />
        <path d="M15 1l6 6h-3V30h-6V7H9z" fill="#f4f4f6" stroke="#3c4350" strokeWidth="1.300" /><path d="M4 21l6-4v7z" fill="#3c4350" /><path d="M8 21.300q8 2 16-1" fill="none" stroke="#3c4350" strokeWidth="1.500" />
      </svg>
    </Slot>
    <Slot $ml={9}><Down h={8} /></Slot>
    <Slot $ml={12}><LookAt /></Slot>
    <Slot $ml={20}>
      <svg width="32" height="32" viewBox="0 0 32 32">
        <path d="M11 30C9 25 5 20 1.500 17.500 1 15 4 15 5.500 16.500L10 19 7 7C7 4 9.500 4 10.500 6.500L13 14 14 3C14.500 0 18 0 18 3V14L21 5C22 2.500 25 3 24.500 6L23 16 27 10C28.500 8 31 9.500 30 12L25 22 22 30z" fill="#f6f6f8" stroke="#3c4350" strokeWidth="1.300" />
      </svg>
    </Slot>
    <Slot $ml={20}><Magnifier /></Slot>
    <Slot $ml={20}><Magnifier boxed /></Slot>
    <Slot $ml={10}><Down h={8} /></Slot>
    <Slot $ml={12}>
      <svg width="32" height="32" viewBox="0 0 32 32">
        <path d="M1.500 1.500h29v23h-29z" fill="#eef0f4" stroke="#3c4350" strokeWidth="1.300" /><path d="M4.500 4.500h23v17h-23z" fill="#93b4de" stroke="#3e5f97" strokeWidth="1.300" /><path d="M13 25h6l1 4 4 1.500H8L12 29z" fill="#8d95a3" />
      </svg>
    </Slot>
    <Slot $ml={4}><Down h={8} /></Slot>
    <Slot $ml={13}>
      <svg width="32" height="32" viewBox="0 0 32 32">
        <path d="M2 2h28v28H2z" fill="#f0f1f3" stroke="#444" strokeWidth="1.500" /><path d="M2 16h28v14H2z" fill="#c3c8d1" />
        <path d="M6 2v28M10 2v28M14 2v28M18 2v28M22 2v28M26 2v28M2 6h28M2 10h28M2 14h28M2 18h28M2 22h28M2 26h28" stroke="#777" strokeWidth="0.900" /><path d="M2 2h28v28H2z" fill="none" stroke="#444" strokeWidth="1.500" />
      </svg>
    </Slot>
    <Slot $ml={5}><Down h={8} /></Slot>
    <Slot $ml={14}>
      <svg width="32" height="32" viewBox="0 0 32 32">
        <path d="M2 4h28v24H2z" fill="#a8c2e6" stroke="#2f4d80" strokeWidth="1.500" /><path d="M2 16h28M16 4v24" stroke="#2f4d80" strokeWidth="1.500" />
        <path d="M4.500 6.500h9v7h-9zM18.500 6.500h9v7h-9zM4.500 18.500h9v7h-9zM18.500 18.500h9v7h-9z" fill="#93b4de" stroke="#7093c4" />
      </svg>
    </Slot>
    <Slot $ml={4}><Down h={8} /></Slot>
  </NavBar>
);

const Menus = () => (
  <>
    <CreateMenu $x={258} $y={225} $w={434}>
      {createItems.map((m, i) => (m.rule ? <MenuRule key={i} /> : (
        <MenuRow key={i} $active={m.active}>
          <MenuIcon>{m.icon && <SmallIcon name={m.icon} />}</MenuIcon>
          <MenuLabel $ls={m.ls}>{m.label}</MenuLabel>
          {m.key && <Shortcut>{m.key}</Shortcut>}
          {m.sub && <svg width="12" height="20" viewBox="0 0 12 20"><path d="M0 0l12 10L0 20z" fill="#333" /></svg>}
        </MenuRow>
      )))}
    </CreateMenu>
    <MenuBox $x={682} $y={266} $w={344}>
      <MenuRow><MenuIcon><SmallIcon name="rect" /></MenuIcon><MenuLabel $ls={0.4}>2-Point Rectangle</MenuLabel><Shortcut $w={55}>R</Shortcut></MenuRow>
      <MenuRow><MenuIcon><SmallIcon name="diamond" /></MenuIcon><MenuLabel $ls={0.4}>3-Point Rectangle</MenuLabel></MenuRow>
      <MenuRow $active><MenuIcon><SmallIcon name="centerRect" /></MenuIcon><MenuLabel>Center Rectangle</MenuLabel><Dots><i /><i /><i /></Dots></MenuRow>
    </MenuBox>
    <Tooltip>
      <p>Creates a rectangle using two points to define<br />the center and one corner.</p>
      <p>Select the first point as the center of the<br />rectangle. Select a corner point or specify<br />width and height values.</p>
      <p>Press ⌘/ for more help.</p>
    </Tooltip>
  </>
);

const SketchFeature = () => (
  <svg width="32" height="32" viewBox="0 0 32 32">
    <path d="M2 2h26v26H2z" fill="#f8f8f8" stroke="#999" strokeWidth="1.500" />
    <path d="M9 9h12c0 8-5 11-12 13z" fill="none" stroke="#777" strokeWidth="1.500" />
    {[[2, 2], [28, 2], [2, 28], [9, 9], [21, 9], [9, 21]].map(([x, y]) => <Sq key={x + '-' + y} x={x} y={y} s={4} />)}
    <path d="M18 26l8-9 4 4-8 8z" fill="#fbb436" stroke="#c98512" strokeWidth="0.800" /><path d="M17 31l1-5 4 3z" fill="#555" /><circle cx="29" cy="18" r="2.800" fill="#ee3b33" />
  </svg>
);

const History = () => (
  <Timeline>
    <Slot $ml={22} $mt={34}><svg width="24" height="28" viewBox="0 0 24 28"><path d="M0 0h4v28H0zM24 0v28L5 14z" fill="#4d4d4f" /></svg></Slot>
    <Slot $ml={24} $mt={34}><svg width="26" height="28" viewBox="0 0 26 28"><path d="M20 1v26L0 14zM22 8h4v12h-4z" fill="#4d4d4f" /></svg></Slot>
    <Slot $ml={26} $mt={32}><svg width="24" height="32" viewBox="0 0 24 32"><path d="M0 0l24 16L0 32z" fill="#4d4d4f" /></svg></Slot>
    <Slot $ml={24} $mt={34}><svg width="26" height="28" viewBox="0 0 26 28"><path d="M6 1v26l20-13zM0 8h4v12H0z" fill="#4d4d4f" /></svg></Slot>
    <Slot $ml={26} $mt={34}><svg width="24" height="28" viewBox="0 0 24 28"><path d="M20 0h4v28h-4zM0 0v28l19-14z" fill="#4d4d4f" /></svg></Slot>
    <Features>
      <FeatureRow>
        <SketchFeature />
        <svg width="32" height="32" viewBox="0 0 32 32">
          <path d="M1 13v11l6 6c5-6 12-6 18 0l1-11c-5-5-13-5-19 0z" fill="#63ade9" /><path d="M1 13C8 5 23 5 31 13l-5 6c-5-5-13-5-19 0z" fill="#8accfa" />
          <path d="M1 13l6 6v11L1 24z" fill="#3d8ac7" /><path d="M26 19l5-6v11l-5 6z" fill="#fff" stroke="#333" strokeWidth="1.300" /><path d="M3 7Q15-2 29 7" fill="none" stroke="#333" strokeWidth="1.500" /><path d="M1 9l1-6 4 4z" fill="#333" />
        </svg>
        <SketchFeature />
      </FeatureRow>
      <svg width="130" height="14" viewBox="0 0 130 14"><path d="M17.500 0V12H111.500V0M63.500 0V12" fill="none" stroke="#ccc" strokeWidth="4" /></svg>
    </Features>
    <Slot $ml={-6} $mt={18}>
      <svg width="24" height="64" viewBox="0 0 24 64"><path d="M0 0h24v8L14 18V64h-4V18L0 8z" fill="#616161" /></svg>
    </Slot>
    <Spacer />
    <Slot $mt={32}><Gear s={32} c="#8a8a8a" /></Slot>
    <Slot $ml={26} />
  </Timeline>
);

export default function App() {
  return (
    <Screen>
      <GlobalStyle />
      <Header />
      <Toolbar />
      <Canvas>
        <ModelView />
        <Browser />
        <CommentsPanel>
          COMMENTS
          <Spacer />
          <RoundSign plus />
          <Slot $ml={11}><Handle flip /></Slot>
        </CommentsPanel>
        <Navigation />
        <SketchPalette />
      </Canvas>
      <History />
      <Menus />
    </Screen>
  );
}
